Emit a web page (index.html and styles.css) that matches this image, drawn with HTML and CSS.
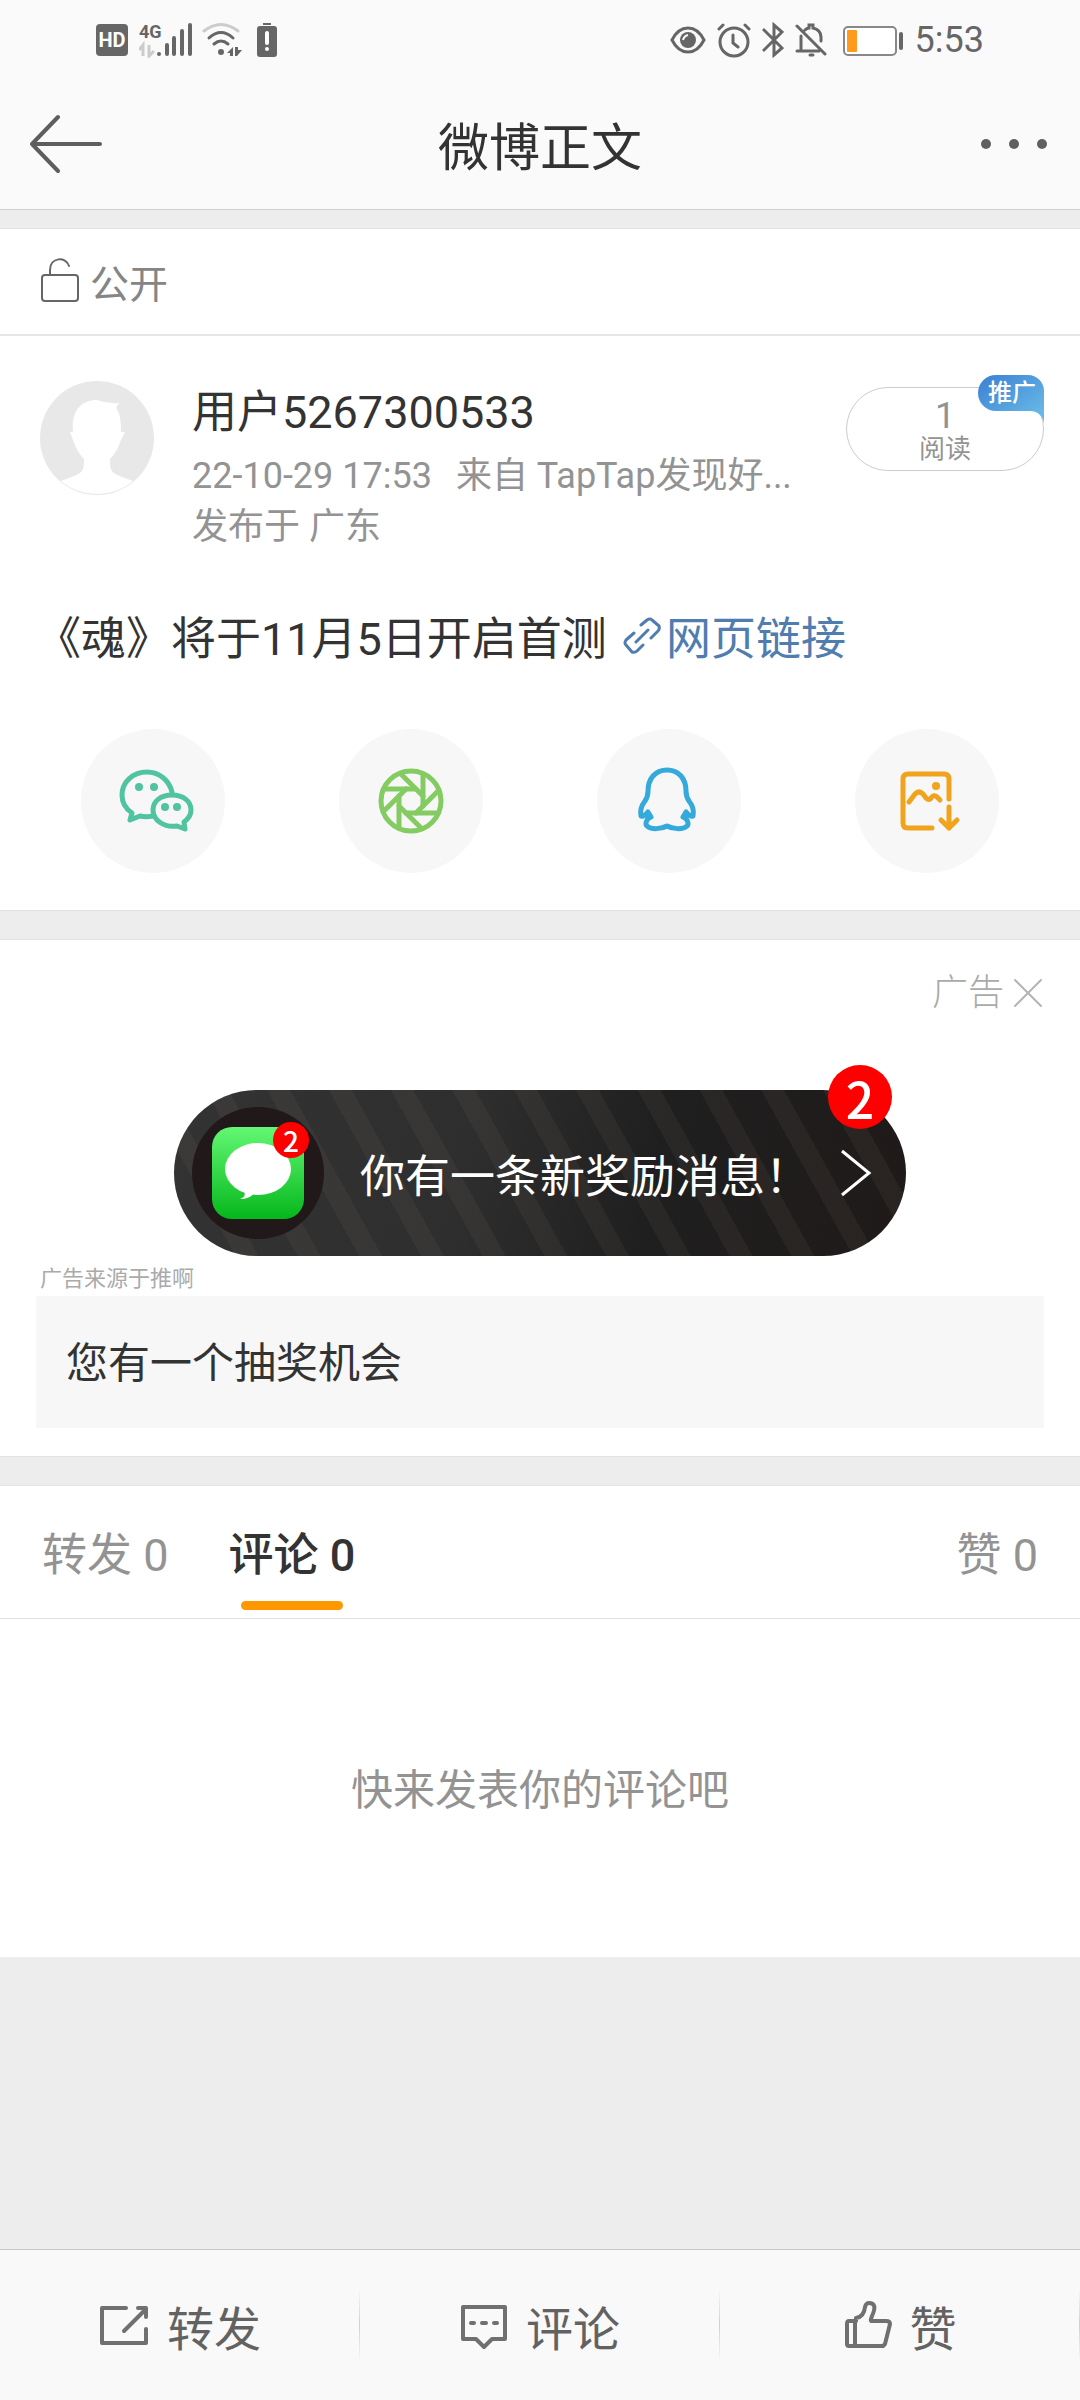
FILE: index.html
```html
<!DOCTYPE html>
<html lang="zh-CN">
  <head>
    <meta charset="UTF-8">
    <title>微博正文</title>
    <meta name="viewport" content="width=device-width">
    <link rel="stylesheet" href="styles.css">
  </head>
  <body>
    <header class="topBar">
      <div class="statusBar">
        <div class="statusLeft">
          <span class="hd">HD</span>
          <svg width="54" height="36" viewBox="0 0 54 36" role="img" aria-label="4G">
            <text x="0" y="16" class="netLabel">4G</text>
            <path d="M4 34V23L0 28M10 23v11l5-5" fill="none" stroke="#ccc" stroke-width="3"/>
            <path d="M20 32v0M28 23v9M35 16v16M43 9v23M51 3v29" fill="none" stroke="#666" stroke-width="4" stroke-linecap="round"/>
          </svg>
          <svg width="40" height="36" viewBox="0 0 40 36" fill="none" stroke="#666" stroke-width="3" stroke-linecap="round">
            <path d="M2 9Q19-4 36 9" stroke="#ccc"/>
            <path d="M7 16Q19 5 31 16M12 22Q19 16 26 22"/>
            <circle cx="19" cy="30" r="3" fill="#666" stroke="none"/>
            <path d="M31 34V25l-6 6h3v3zM33 25v9h2l5-6h-4v-3z" fill="#666" stroke="none"/>
          </svg>
          <svg class="alertBattery" width="20" height="36" viewBox="0 0 20 36">
            <path d="M6 1h8v2H6z" fill="#666"/>
            <rect y="4" width="20" height="31" rx="3" fill="#666"/>
            <path d="M10 11v10M10 27v0" stroke="#fff" stroke-width="4" stroke-linecap="round"/>
          </svg>
        </div>
        <div class="statusRight">
          <svg width="36" height="36" viewBox="0 0 36 36" fill="none" stroke="#666" stroke-width="3">
            <path d="M2 18C10 2 26 2 34 18C26 34 10 34 2 18z"/>
            <circle cx="18" cy="18" r="8" fill="#666" stroke="none"/>
            <path d="M13 18q1-4 5-5" stroke="#fafafa" stroke-width="2"/>
          </svg>
          <svg width="34" height="36" viewBox="0 0 34 36" fill="none" stroke="#666" stroke-width="3" stroke-linecap="round">
            <circle cx="17" cy="20" r="14"/>
            <path d="M16 13v8l5 4M2 7l4-4M32 7l-4-4"/>
          </svg>
          <svg width="22" height="36" viewBox="0 0 22 36" fill="none" stroke="#666" stroke-width="3">
            <path d="M1 7l19 19-8 7V3l8 7L1 29"/>
          </svg>
          <svg width="32" height="36" viewBox="0 0 32 36" fill="none" stroke="#666" stroke-width="3" stroke-linecap="round">
            <path d="M2 4l28 28M2 29h22M6 27V14M10 8q2-2 4-2v-3h4v3q8 2 8 9v4M15 33h3"/>
          </svg>
          <svg class="battery" width="62" height="36" viewBox="0 0 62 36">
            <rect x="2" y="5" width="52" height="28" rx="4" fill="#fff" stroke="#888" stroke-width="2"/>
            <rect x="5" y="8" width="10" height="22" rx="1" fill="#ff9a1f"/>
            <rect x="57" y="10" width="4" height="18" rx="2" fill="#666"/>
          </svg>
          <time class="clock">5:53</time>
        </div>
      </div>
      <nav class="titleBar">
        <button class="iconButton" aria-label="返回">
          <svg width="74" height="60" viewBox="0 0 74 60" fill="none" stroke="#5e5e5e" stroke-width="4" stroke-linecap="round" stroke-linejoin="round">
            <path d="M28 3L2 30l26 27M2 30h68"/>
          </svg>
        </button>
        <h1>微博正文</h1>
        <button class="iconButton" aria-label="更多">
          <svg width="74" height="60" viewBox="0 0 74 60" fill="#606060">
            <circle cx="10" cy="30" r="5"/><circle cx="38" cy="30" r="5"/><circle cx="66" cy="30" r="5"/>
          </svg>
        </button>
      </nav>
    </header>

    <main>
      <article class="card">
        <div class="visibility">
          <svg width="40" height="46" viewBox="0 0 40 46" fill="none" stroke="#666" stroke-width="2" stroke-linecap="round">
            <rect x="2" y="17" width="36" height="26" rx="3"/>
            <path d="M10 17v-5c0-13 16-14 19-4"/>
          </svg>
          <span>公开</span>
        </div>
        <div class="post">
          <div class="author">
            <svg class="avatar" width="114" height="116" viewBox="0 0 114 116">
              <circle cx="57" cy="58" r="57" fill="#e8e8e8"/>
              <path d="M21 101C44 93 44 92 44 79Q37 72 33 60L30 52h3C31 31 41 20 57 20Q68 24 79 23L76 28Q81 33 81 52h4L81 60Q77 72 70 79C70 92 70 93 93 101A56 56 0 0 1 21 101z" fill="#fff"/>
            </svg>
            <div class="authorInfo">
              <h2>用户5267300533</h2>
              <p class="meta"><time>22-10-29 17:53</time><span>来自 TapTap发现好...</span></p>
              <p class="meta">发布于 广东</p>
            </div>
            <button class="reads">
              <span class="readCount">1</span>
              <span>阅读</span>
              <span class="promo">
                <svg width="66" height="48" viewBox="0 0 66 48" aria-hidden="true">
                  <defs>
                    <linearGradient id="promoFill" x1="0" y1="0" x2="1" y2="1">
                      <stop offset="0" stop-color="#3b7fd4"/>
                      <stop offset="1" stop-color="#6cc0e8"/>
                    </linearGradient>
                  </defs>
                  <path d="M18 0H50a16 16 0 0 1 16 16V48Q63 36 52 36H18a18 18 0 0 1 0-36z" fill="url(#promoFill)"/>
                </svg>
                <span class="promoText">推广</span>
              </span>
            </button>
          </div>
          <p class="postText">《魂》将于11月5日开启首测 <a href="#link"><svg width="38" height="38" viewBox="0 0 38 38" fill="none" stroke="currentColor" stroke-width="3" stroke-linecap="round" stroke-linejoin="round"><path d="M18 8L24 3Q27 1 29 3L36 9Q37 12 35 14L28 21M11 16L3 23Q1 26 3 28L9 35Q12 36 14 34L20 28M13 25L25 13"/></svg>网页链接</a></p>
          <div class="shareRow">
            <button class="shareButton wechat" aria-label="微信">
              <svg viewBox="0 0 144 144">
                <path d="M91 63C88 51 78 43 66 43C52 43 41 53 41 66C41 74 45 80 51 84L49 91L59 87C63 88 67 88 72 87"/>
                <path d="M91 66C102 66 110 72 110 81C110 86 107 90 103 93L104 100L96 97C83 99 72 91 72 81C72 72 80 66 91 66z"/>
                <g class="solid"><circle cx="58" cy="58" r="4"/><circle cx="73" cy="58" r="4"/><circle cx="84" cy="78" r="4"/><circle cx="96" cy="78" r="4"/></g>
              </svg>
            </button>
            <button class="shareButton moments" aria-label="朋友圈">
              <svg viewBox="0 0 144 144">
                <circle cx="72" cy="72" r="30"/>
                <path d="M45 60H77"/>
                <path d="M45 60H77" transform="rotate(45 72 72)"/>
                <path d="M45 60H77" transform="rotate(90 72 72)"/>
                <path d="M45 60H77" transform="rotate(135 72 72)"/>
                <path d="M45 60H77" transform="rotate(180 72 72)"/>
                <path d="M45 60H77" transform="rotate(225 72 72)"/>
                <path d="M45 60H77" transform="rotate(270 72 72)"/>
                <path d="M45 60H77" transform="rotate(315 72 72)"/>
              </svg>
            </button>
            <button class="shareButton qq" aria-label="QQ">
              <svg viewBox="0 0 144 144">
                <path d="M70 41C58 41 51 50 51 62C51 66 50 69 48 72C44 77 43 82 44 87C46 88 49 86 51 83L54 88C49 90 48 95 50 97C54 101 65 100 70 97C75 100 86 101 90 97C92 95 91 90 86 88L89 83C91 86 94 88 96 87C97 82 96 77 92 72C90 69 89 66 89 62C89 50 82 41 70 41z"/>
              </svg>
            </button>
            <button class="shareButton saveImage" aria-label="保存图片">
              <svg viewBox="0 0 144 144">
                <path d="M94 70V50q0-5-5-5H53q-5 0-5 5v44q0 5 5 5h24M94 78v21M86 91l8 8 8-8"/>
                <path d="M54 73l6-8q4-4 8 0l3 4q3 3 5 0 3-4 6-1l3 3"/>
                <circle class="solid" cx="81" cy="57" r="4"/>
              </svg>
            </button>
          </div>
        </div>
      </article>

      <section class="card ad">
        <div class="adTop">
          <span>广告</span>
          <button class="iconButton" aria-label="关闭广告">
            <svg width="30" height="30" viewBox="0 0 30 30" fill="none" stroke="#b5b5b5" stroke-width="2" stroke-linecap="round">
              <path d="M1 2l26 26M27 2L1 28"/>
            </svg>
          </button>
        </div>
        <a class="banner" href="#ad">
          <span class="bannerIcon">
            <svg width="92" height="92" viewBox="0 0 92 92">
              <defs>
                <linearGradient id="messageFill" x1="0" y1="0" x2="0" y2="1">
                  <stop offset="0" stop-color="#63f874"/>
                  <stop offset="1" stop-color="#05b71b"/>
                </linearGradient>
              </defs>
              <rect width="92" height="92" rx="20" fill="url(#messageFill)"/>
              <ellipse cx="46" cy="42" rx="33" ry="26" fill="#fff"/>
              <path d="M32 64q3 5-4 8 10 0 14-6z" fill="#fff"/>
            </svg>
            <span class="badge smallBadge">2</span>
          </span>
          <span>你有一条新奖励消息！</span>
          <svg class="chevron" width="32" height="48" viewBox="0 0 32 48" fill="none" stroke="#fff" stroke-width="3">
            <path d="M2 2l27 22L2 46"/>
          </svg>
          <span class="badge bigBadge">2</span>
        </a>
        <p class="adSource">广告来源于推啊</p>
        <a class="adTitle" href="#ad">您有一个抽奖机会</a>
      </section>

      <section class="card comments">
        <div class="tabs" role="tablist">
          <button class="tab" role="tab">转发 0</button>
          <button class="tab active" role="tab" aria-selected="true">评论 0</button>
          <button class="tab likes" role="tab">赞 0</button>
        </div>
        <p class="empty">快来发表你的评论吧</p>
      </section>
    </main>

    <footer class="actions">
      <button>
        <svg width="50" height="48" viewBox="0 0 50 48">
          <path d="M27 7H3v35h44V28M25 30L47 8M39 7h8v9"/>
        </svg>
        转发
      </button>
      <button>
        <svg width="48" height="48" viewBox="0 0 48 48">
          <path d="M3 6h42v32H32l-8 8-8-8H3zM11 22h3M22 22h4M34 22h3"/>
        </svg>
        评论
      </button>
      <button>
        <svg width="48" height="48" viewBox="0 0 48 48">
          <path d="M12 20H5q-2 0-2 3v20q0 2 2 2h34l2-2 5-20q0-3-4-3H28c-2 0-1-2 0-5q6-13-3-13-3 0-4 4-1 10-9 11zM11 20v25"/>
        </svg>
        赞
      </button>
    </footer>
  </body>
</html>
```

FILE: styles.css
```css
:root {
  --background: #ededed;
  --bar: #fafafa;
  --line: #e2e2e2;
  --text: #333;
  --muted: #939393;
  --icon: #666;
  --link: #507daf;
  --orange: #ff9700;
}
* { box-sizing: border-box; }
body {
  margin: 0;
  min-height: 100vh;
  display: flex;
  flex-direction: column;
  background-color: var(--background);
  color: var(--text);
  font-family: Roboto, "Noto Sans CJK SC", sans-serif;
  font-size: 45px;
}
h1, h2, p { margin: 0; font-weight: 400; }
a { color: inherit; text-decoration: none; }
button {
  background: none;
  border: 0;
  padding: 0;
  color: inherit;
  font: inherit;
}
svg { display: block; flex: none; }

/* Status bar and title */
.topBar {
  background-color: var(--bar);
  border-bottom: 1px solid #d0d0d0;
}
.statusBar {
  display: flex;
  justify-content: space-between;
  align-items: center;
  height: 80px;
  padding: 0 96px;
}
.statusLeft, .statusRight { display: flex; align-items: center; }
.statusLeft { gap: 9px; }
.statusRight { gap: 11px; }
.hd {
  width: 32px;
  margin-right: 2px;
  background-color: var(--icon);
  border-radius: 4px;
  color: #fff;
  font-size: 20px;
  font-weight: 700;
  line-height: 32px;
  text-align: center;
}
.netLabel { fill: var(--icon); font-size: 18px; font-weight: 700; }
.alertBattery { margin-left: 6px; }
.battery { margin-left: 4px; }
.clock { color: var(--icon); font-size: 36px; line-height: 40px; }
.titleBar {
  display: flex;
  justify-content: space-between;
  align-items: center;
  height: 129px;
  padding: 0 30px 2px;
}
.titleBar h1 { font-size: 51px; }

/* White blocks on the grey page */
.card {
  margin-top: 28px;
  background-color: #fff;
  border-top: 1px solid var(--line);
  border-bottom: 1px solid var(--line);
}
.card:first-child { margin-top: 18px; }

/* Post */
.visibility {
  display: flex;
  align-items: center;
  gap: 10px;
  height: 107px;
  padding: 0 40px 2px;
  border-bottom: 2px solid #e6e6e6;
  color: #858585;
  font-size: 39px;
}
.post { padding: 44px 36px 37px; }
.author { display: flex; align-items: flex-start; padding-left: 4px; }
.authorInfo { margin: 3px 0 0 38px; }
.authorInfo h2 { font-size: 45px; line-height: 60px; margin-bottom: 8px; }
.meta {
  display: flex;
  gap: 24px;
  color: var(--muted);
  font-size: 36px;
  line-height: 51px;
}
.reads {
  position: relative;
  display: flex;
  flex-direction: column;
  align-items: center;
  width: 198px;
  margin: 7px 0 0 auto;
  padding: 10px 0 6px;
  border: 1px solid #ccc;
  border-radius: 42px;
  color: var(--muted);
  font-size: 26px;
  line-height: 30px;
}
.readCount { font-size: 36px; line-height: 36px; }
.promo { position: absolute; top: -13px; right: -1px; }
.promoText {
  position: absolute;
  top: 0;
  left: 10px;
  color: #fff;
  font-size: 24px;
  font-weight: 500;
  line-height: 36px;
  white-space: nowrap;
}
.postText {
  margin-top: 54px;
  line-height: 66px;
}
.postText a { color: var(--link); }
.postText svg { display: inline-block; margin: 0 5px; }
.shareRow {
  display: flex;
  justify-content: space-between;
  padding: 0 45px;
  margin-top: 56px;
}
.shareButton {
  width: 144px;
  height: 144px;
  border-radius: 50%;
  background-color: #f7f7f7;
}
.shareButton svg {
  fill: none;
  stroke: currentColor;
  stroke-width: 5px;
  stroke-linecap: round;
  stroke-linejoin: round;
}
.shareButton .solid { fill: currentColor; stroke: none; }
.wechat { color: #50c3a0; }
.moments { color: #84cc62; }
.qq { color: #34a9dc; }
.saveImage { color: #f0a31d; }

/* Ad */
.ad { padding: 28px 36px; }
.adTop {
  display: flex;
  justify-content: flex-end;
  align-items: center;
  gap: 10px;
  color: #aaa;
  font-size: 36px;
  font-weight: 300;
  line-height: 50px;
}
.banner {
  position: relative;
  display: flex;
  align-items: center;
  margin: 72px 138px 0;
  padding: 17px 34px 17px 18px;
  border-radius: 83px;
  background:
    repeating-linear-gradient(61deg, rgba(130, 120, 110, 0.1) 0 20px, transparent 20px 54px),
    linear-gradient(100deg, #333 0%, #2e2e2e 40%, #1f1f1f 65%, #1f1a19 100%);
  color: #fff;
  font-size: 45px;
}
.bannerIcon {
  position: relative;
  display: grid;
  place-items: center;
  width: 132px;
  height: 132px;
  margin-right: 36px;
  border-radius: 50%;
  background-color: #201819;
}
.chevron { margin-left: auto; }
.badge {
  position: absolute;
  border-radius: 50%;
  background-color: #f00;
  font-family: "Noto Sans CJK SC", sans-serif;
  font-weight: 500;
  text-align: center;
}
.smallBadge {
  top: 15px;
  right: 15px;
  width: 36px;
  font-size: 28px;
  line-height: 36px;
}
.bigBadge {
  top: -25px;
  right: 14px;
  width: 64px;
  font-size: 50px;
  line-height: 64px;
}
.adSource {
  padding: 6px 4px 0;
  color: #aaa;
  font-size: 22px;
  line-height: 34px;
}
.adTitle {
  display: block;
  padding: 38px 30px 34px;
  background-color: #f7f7f7;
  font-size: 42px;
  line-height: 60px;
}

/* Comments */
.comments { border-bottom: 0; }
.tabs {
  display: flex;
  gap: 60px;
  padding: 0 42px;
  border-bottom: 1px solid var(--line);
}
.tab {
  position: relative;
  padding-top: 8px;
  color: var(--muted);
  font-size: 45px;
  line-height: 124px;
}
.tab.active { color: var(--text); font-weight: 500; }
.tab.active::after {
  content: "";
  position: absolute;
  bottom: 8px;
  left: 10%;
  right: 10%;
  height: 9px;
  border-radius: 5px;
  background-color: var(--orange);
}
.likes { margin-left: auto; }
.empty {
  padding: 142px 36px 136px;
  color: var(--muted);
  font-size: 42px;
  line-height: 60px;
  text-align: center;
}

/* Bottom actions */
.actions {
  display: flex;
  margin-top: auto;
  height: 151px;
  background-color: #f9f9f9;
  border-top: 1px solid #c8c8c8;
}
.actions button {
  flex: 1;
  display: flex;
  justify-content: center;
  align-items: center;
  gap: 18px;
  background: linear-gradient(transparent, #d0d0d0, transparent) right center / 1px 74px no-repeat;
  color: #626262;
  font-size: 47px;
}
.actions svg {
  fill: none;
  stroke: #707070;
  stroke-width: 4px;
  stroke-linecap: round;
  stroke-linejoin: round;
}
```
